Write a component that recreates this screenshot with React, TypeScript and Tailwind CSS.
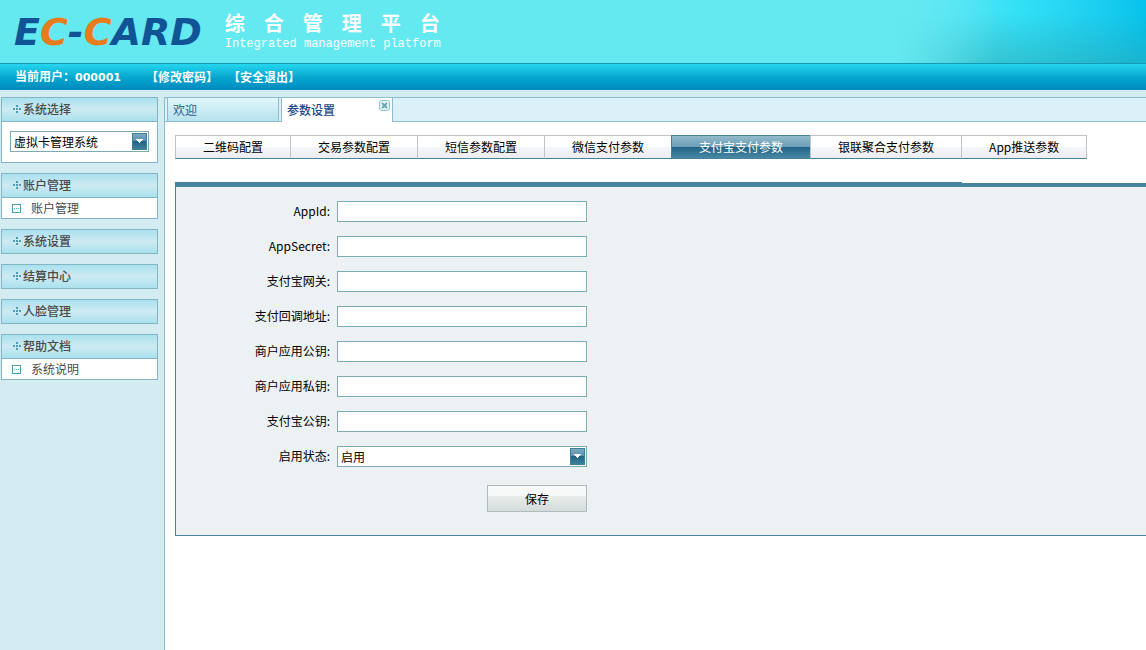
import React, { useState } from 'react';

interface MenuGroup {
    title: string;
    items: string[];
}

const menuGroups: MenuGroup[] = [
    { title: '账户管理', items: ['账户管理'] },
    { title: '系统设置', items: [] },
    { title: '结算中心', items: [] },
    { title: '人脸管理', items: [] },
    { title: '帮助文档', items: ['系统说明'] },
];

const paramTabs = [
    '二维码配置',
    '交易参数配置',
    '短信参数配置',
    '微信支付参数',
    '支付宝支付参数',
    '银联聚合支付参数',
    'App推送参数',
];

const fields = [
    { id: 'appId', label: 'AppId' },
    { id: 'appSecret', label: 'AppSecret' },
    { id: 'gateway', label: '支付宝网关' },
    { id: 'notifyUrl', label: '支付回调地址' },
    { id: 'publicKey', label: '商户应用公钥' },
    { id: 'privateKey', label: '商户应用私钥' },
    { id: 'alipayKey', label: '支付宝公钥' },
];

const GroupIcon = () => (
    <svg width="8" height="8" viewBox="0 0 8 8" fill="#4f9db5" shapeRendering="crispEdges" aria-hidden="true">
        <path d="M3 0h2v2H3zM0 3h2v2H0zM3 3h2v2H3zM6 3h2v2H6zM3 6h2v2H3z" />
    </svg>
);

const ItemIcon = () => (
    <svg width="9" height="9" viewBox="0 0 9 9" shapeRendering="crispEdges" aria-hidden="true">
        <path d="M0 0h9v9H0z" fill="#4f9db5" />
        <path d="M1 1h7v7H1z" fill="#fff" />
        <path d="M2 4h1v1H2zM4 4h1v1H4zM6 4h1v1H6z" fill="#4f9db5" />
    </svg>
);

const CloseIcon = () => (
    <svg width="11" height="11" viewBox="0 0 11 11" aria-hidden="true">
        <rect x="0.5" y="0.5" width="10" height="10" rx="2.5" fill="#e3f4f4" stroke="#8fc4c6" />
        <path d="M3 3l5 5M8 3l-5 5" stroke="#6fa9b5" strokeWidth="2" />
    </svg>
);

interface SelectBoxProps {
    id: string;
    label?: string;
    options: string[];
    className: string;
}

const SelectBox: React.FC<SelectBoxProps> = ({ id, label, options, className }) => (
    <div className={`relative h-[21px] ${className}`}>
        <select
            id={id}
            aria-label={label}
            className="block h-full w-full appearance-none border border-[#7cabb2] bg-white pl-[3px] text-xs leading-[19px] text-black outline-none"
        >
            {options.map(o => <option key={o}>{o}</option>)}
        </select>
        <span className="pointer-events-none absolute right-[2px] top-[2px] h-[17px] w-[15px] border border-[#3f7f99] bg-[linear-gradient(#79a9bf,#5b93ad_48%,#1f6485_48%,#3f7f99)]">
            <svg width="13" height="15" viewBox="0 0 13 15" shapeRendering="crispEdges" aria-hidden="true">
                <path d="M3 5h7v1H3zM4 6h5v1H4zM5 7h3v1H5zM6 8h1v1H6z" fill="#fff" />
            </svg>
        </span>
    </div>
);

const GroupTitle: React.FC<{ title: string }> = ({ title }) => (
    <h2 className="flex h-[25px] items-center gap-[2px] border border-[#85b5c4] bg-linear-to-b from-[#a9e1ef] via-[#cdeaf2] to-[#a9e1ef] pb-[2px] pl-[11px] text-xs font-medium text-[#4a4a4a]">
        <GroupIcon />
        {title}
    </h2>
);

const Header = () => (
    <header>
        <div className="flex h-16 items-stretch border-b border-[#1699b5] bg-[#65e9f1]">
            <div className="flex items-center pl-[14px] font-['DejaVu_Sans',sans-serif] text-[38px] font-bold italic leading-none text-[#105496]">
                <span>E</span>
                <span className="text-[#e87c1c]">C</span>
                <span>-</span>
                <span className="text-[#e87c1c]">C</span>
                <span>ARD</span>
            </div>
            <div className="flex flex-col justify-center pb-1 pl-[23px] text-white">
                <h1 className="flex gap-[19px] text-xl font-bold leading-[29px]">
                    {[...'综合管理平台'].map(c => <span key={c}>{c}</span>)}
                </h1>
                <p className="font-['Liberation_Mono',monospace] text-xs leading-[14px]">Integrated management platform</p>
            </div>
            <div className="ml-auto w-[250px] bg-linear-to-r from-[#65e9f1] via-[#32e0f6] to-[#04c3ec]">
                <div className="h-full bg-linear-to-b from-transparent from-20% to-[#2aa5b0]/50">
                    <div className="h-full bg-linear-to-r from-[#65e9f1] to-transparent to-40%" />
                </div>
            </div>
        </div>
        <nav className="flex h-[26px] items-center bg-linear-to-b from-[#25d6ef] via-[#06a8d0] to-[#0089bd] pl-[15px] text-xs font-bold text-white">
            <span>当前用户：<span className="font-['DejaVu_Sans',sans-serif] text-[11px]">000001</span></span>
            <a href="#password" className="ml-[25px]">【修改密码】</a>
            <a href="#logout" className="ml-[10px]">【安全退出】</a>
        </nav>
    </header>
);

const Sidebar = () => (
    <aside className="flex w-[164px] shrink-0 flex-col gap-[10px] pl-px pr-[6px]">
        <section>
            <GroupTitle title="系统选择" />
            <div className="border border-t-0 border-[#85b5c4] bg-white px-2 pb-[10px] pt-[9px]">
                <SelectBox id="system" label="系统选择" options={['虚拟卡管理系统']} className="w-full" />
            </div>
        </section>
        {menuGroups.map(group => (
            <section key={group.title}>
                <GroupTitle title={group.title} />
                {group.items.map(item => (
                    <a
                        key={item}
                        href="#menu"
                        className="flex h-[21px] items-center gap-[10px] border border-t-0 border-[#85b5c4] bg-white pl-[10px] text-xs text-[#4a4a4a]"
                    >
                        <ItemIcon />
                        {item}
                    </a>
                ))}
            </section>
        ))}
    </aside>
);

const PageTabs = () => (
    <div className="flex h-[25px] gap-[2px] border-y border-[#8abccb] bg-[#dcf0f8] pl-[2px] text-xs text-[#2b5c92]">
        <button type="button" className="w-28 border-x border-[#8abccb] bg-linear-to-b from-[#e3f6fb] to-[#b5e2ee] pl-[5px] text-left">
            欢迎
        </button>
        <div className="-mb-px flex w-28 items-center justify-between border-x border-[#8abccb] bg-white pl-[5px] pr-[2px]">
            <button type="button" className="font-medium text-[#1d4a86]">参数设置</button>
            <button type="button" aria-label="关闭" className="self-start pt-[2px]"><CloseIcon /></button>
        </div>
    </div>
);

const App: React.FC = () => {
    const [active, setActive] = useState('支付宝支付参数');

    return (
        <div className="flex min-h-screen flex-col bg-[#d3ecf1] font-['Noto_Sans_CJK_SC',sans-serif] text-xs text-black">
            <Header />
            <div className="flex flex-1 pt-[7px]">
                <Sidebar />
                <main className="min-w-0 flex-1 border-l border-[#8abccb] bg-white">
                    <PageTabs />
                    <div className="pl-[10px] pt-[13px]">
                        <div className="flex">
                            {paramTabs.map(tab => (
                                <button
                                    key={tab}
                                    type="button"
                                    onClick={() => setActive(tab)}
                                    className={`h-6 whitespace-nowrap border-y border-l px-[27px] last:border-r ${tab === active
                                        ? 'border-[#44819a] bg-[linear-gradient(#93bacb,#6a9db5_50%,#1f6485_50%,#4a87a3)] text-white'
                                        : 'border-[#c3c3c3] border-b-[#44819a] bg-[linear-gradient(#ffffff_50%,#f5f6f9_50%,#ebedf2)]'
                                        }`}
                                >
                                    {tab}
                                </button>
                            ))}
                        </div>

                        {/* Settings form */}
                        <div className="mt-[23px] h-px w-[81%] bg-[#4684a0]" />
                        <form
                            onSubmit={e => e.preventDefault()}
                            className="flex flex-col gap-[14px] border-b border-l border-t-4 border-[#4684a0] bg-[#ecf1f4] pb-[23px] pt-[14px]"
                        >
                            {fields.map(field => (
                                <div key={field.id} className="flex items-center gap-[7px]">
                                    <label htmlFor={field.id} className="w-[154px] pb-[2px] text-right">{field.label}:</label>
                                    <input id={field.id} type="text" className="h-[21px] w-[250px] border border-[#7cabb2] bg-white px-[3px] outline-none" />
                                </div>
                            ))}
                            <div className="flex items-center gap-[7px]">
                                <label htmlFor="status" className="w-[154px] pb-[2px] text-right">启用状态:</label>
                                <SelectBox id="status" options={['启用', '停用']} className="w-[250px]" />
                            </div>
                            <button
                                type="submit"
                                className="ml-[311px] mt-1 h-[27px] w-[100px] border border-[#b1bbbd] bg-[linear-gradient(#f7f9f9_40%,#e9edec_40%,#d5dbdb)]"
                            >
                                保存
                            </button>
                        </form>
                    </div>
                </main>
            </div>
        </div>
    );
};

export default App;
